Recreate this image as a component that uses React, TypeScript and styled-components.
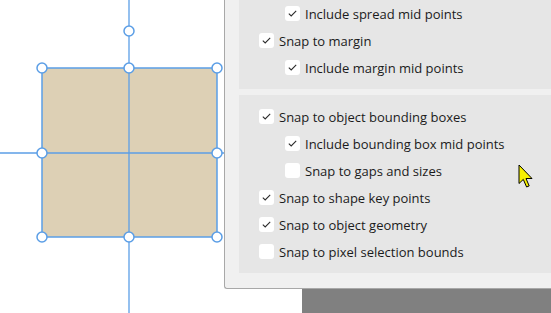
import React from "react";
import styled, { createGlobalStyle } from "styled-components";

const Global = createGlobalStyle`
  html, body { margin: 0; padding: 0; background: #ffffff; }
  body { font-family: "Segoe UI", "Open Sans", "Noto Sans", sans-serif; }
`;

const Stage = styled.div`
  position: relative;
  width: 551px;
  height: 313px;
  overflow: hidden;
  background: #ffffff;
`;

const Canvas = styled.svg`
  display: block;
`;

const Backdrop = styled.div`
  position: absolute;
  left: 302px;
  top: 289px;
  right: 0;
  bottom: 0;
  background: #808080;
`;

const Panel = styled.div`
  position: absolute;
  left: 224px;
  top: -14px;
  width: 360px;
  box-sizing: border-box;
  background: #f0f0f0;
  border-left: 1px solid #a8a8a8;
  border-bottom: 1px solid #a8a8a8;
  border-bottom-left-radius: 3px;
  padding: 6px 0 15px 14px;
  display: flex;
  flex-direction: column;
  gap: 6px;
`;

const Section = styled.div`
  background: #e6e6e6;
  padding: 8px 0;
  display: flex;
  flex-direction: column;
`;

const Row = styled.label<{ $level: number }>`
  height: 27px;
  display: flex;
  align-items: center;
  padding-left: ${(p) => (p.$level === 2 ? 46 : 20)}px;
  gap: 5px;
  font-size: 13px;
  color: #1b1b1b;
  white-space: nowrap;
`;

const Box = styled.span`
  width: 15px;
  height: 15px;
  box-sizing: border-box;
  background: #ffffff;
  border-radius: 3px;
  display: flex;
  align-items: center;
  justify-content: center;
  flex: none;
`;

const Cursor = styled.svg`
  position: absolute;
  left: 518px;
  top: 164px;
`;

type Item = { label: string; level: number; checked: boolean };

const section1: Item[] = [
  { label: "Include spread mid points", level: 2, checked: true },
  { label: "Snap to margin", level: 1, checked: true },
  { label: "Include margin mid points", level: 2, checked: true },
];

const section2: Item[] = [
  { label: "Snap to object bounding boxes", level: 1, checked: true },
  { label: "Include bounding box mid points", level: 2, checked: true },
  { label: "Snap to gaps and sizes", level: 2, checked: false },
  { label: "Snap to shape key points", level: 1, checked: true },
  { label: "Snap to object geometry", level: 1, checked: true },
  { label: "Snap to pixel selection bounds", level: 1, checked: false },
];

const Check = () => (
  <svg width="9" height="7" viewBox="0 0 9 7">
    <path d="M0.8 3.6 L3.2 5.9 L8.2 0.9" fill="none" stroke="#2b2b2b" strokeWidth="1.1" />
  </svg>
);

const Option = ({ item }: { item: Item }) => (
  <Row $level={item.level}>
    <Box>{item.checked && <Check />}</Box>
    {item.label}
  </Row>
);

const BLUE = "#5b9ee6";

const handles: [number, number][] = [
  [129, 31],
  [42, 68],
  [129, 68],
  [217, 68],
  [42, 153],
  [217, 153],
  [42, 237],
  [129, 237],
  [217, 237],
];

export default function App() {
  return (
    <>
      <Global />
      <Stage>
        <Canvas width="551" height="313" viewBox="0 0 551 313">
          <rect x="42" y="68" width="175" height="169" rx="3" fill="#ddd0b5" stroke={BLUE} strokeWidth="1.5" />
          <line x1="129" y1="0" x2="129" y2="313" stroke={BLUE} strokeWidth="1.3" />
          <line x1="0" y1="153" x2="240" y2="153" stroke={BLUE} strokeWidth="1.3" />
          {handles.map(([x, y], i) => (
            <circle key={i} cx={x} cy={y} r="5" fill="#ffffff" stroke={BLUE} strokeWidth="1.5" />
          ))}
        </Canvas>
        <Backdrop />
        <Panel>
          <Section>
            {section1.map((it) => (
              <Option key={it.label} item={it} />
            ))}
          </Section>
          <Section>
            {section2.map((it) => (
              <Option key={it.label} item={it} />
            ))}
          </Section>
        </Panel>
        <Cursor width="16" height="26" viewBox="0 0 16 26">
          <path
            d="M1 1 L1 19.5 L5.3 15.4 L8.6 23 L11.2 21.9 L8 14.5 L14 14.5 Z"
            fill="#f5f000"
            stroke="#000000"
            strokeWidth="1"
            strokeLinejoin="miter"
          />
        </Cursor>
      </Stage>
    </>
  );
}
